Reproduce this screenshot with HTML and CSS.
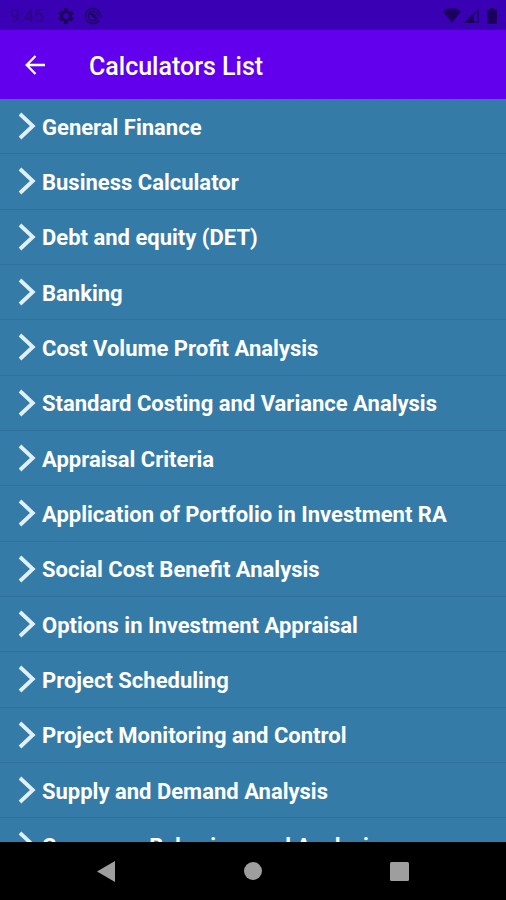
FILE: index.html
```html
<!DOCTYPE html>
<html lang="en">
<head>
<meta charset="utf-8">
<title>Calculators List</title>
<link rel="stylesheet" href="styles.css">
</head>
<body>
<svg class="defs" width="0" height="0" aria-hidden="true">
  <symbol id="chevron" viewBox="0 0 18 28"><path d="M2 2L14.8 14L2 26" fill="none" stroke="currentColor" stroke-width="3.8"/></symbol>
</svg>
<div class="screen">
  <header class="status">
    <span class="time">9:45</span>
    <svg class="gear" viewBox="2 2 20 20"><path fill="currentColor" d="M19.14 12.94c.04-.3.06-.61.06-.94s-.02-.64-.07-.94l2.03-1.58c.18-.14.23-.41.12-.61l-1.92-3.32c-.12-.22-.37-.29-.59-.22l-2.39.96c-.5-.38-1.03-.7-1.62-.94L14.4 2.81c-.04-.24-.24-.41-.48-.41h-3.84c-.24 0-.43.17-.47.41l-.36 2.54c-.59.24-1.13.57-1.62.94l-2.39-.96c-.22-.08-.47 0-.59.22L2.74 8.87c-.12.21-.08.47.12.61l2.03 1.58c-.05.3-.09.63-.09.94s.02.64.07.94l-2.03 1.58c-.18.14-.23.41-.12.61l1.92 3.32c.12.22.37.29.59.22l2.39-.96c.5.38 1.03.7 1.62.94l.36 2.54c.05.24.24.41.48.41h3.84c.24 0 .44-.17.47-.41l.36-2.54c.59-.24 1.13-.56 1.62-.94l2.39.96c.22.08.47 0 .59-.22l1.92-3.32c.12-.22.07-.47-.12-.61zM12 15.6A3.6 3.6 0 1 1 12 8.4a3.6 3.6 0 0 1 0 7.2z"/></svg>
    <svg class="sync" viewBox="0 0 18 18" fill="none" stroke="currentColor"><path stroke-width="1.4" d="M15.4 12.9A7.5 7.5 0 1 1 16.4 8L17.4 10.4"/><circle cx="9" cy="9" r="4.7" stroke-width="1.4"/><path stroke-width="1.6" d="M5.5 6L12.2 12M8 6.2L11.8 9.5"/></svg>
    <div class="signals">
      <svg width="18" height="15" viewBox="0 0 18 15"><path fill="currentColor" d="M0 3.5C5-.9 13-.9 18 3.5L9 14.7z"/></svg>
      <svg width="15" height="15" viewBox="0 0 15 15"><path fill="currentColor" d="M0 15L10 5V15z"/><path fill="none" stroke="currentColor" stroke-width="1.2" d="M2 14.2L14.2 2V14.2z"/></svg>
      <svg class="battery" width="10" height="16" viewBox="0 0 10 16"><path fill="currentColor" d="M3 0h4v1.5h2q1 0 1 1V15q0 1-1 1H1q-1 0-1-1V2.500q0-1 1-1h2z"/></svg>
    </div>
  </header>
  <div class="appbar">
    <svg class="back" viewBox="0 0 20 20" fill="none" stroke="currentColor" stroke-width="2.3"><path d="M20 10H2M10.500 1L1.700 10L10.500 19"/></svg>
    <h1 class="title">Calculators List</h1>
  </div>
  <ul class="list">
    <li class="row"><svg class="chevron"><use href="#chevron"/></svg><span>General Finance</span></li>
    <li class="row"><svg class="chevron"><use href="#chevron"/></svg><span>Business Calculator</span></li>
    <li class="row"><svg class="chevron"><use href="#chevron"/></svg><span>Debt and equity (DET)</span></li>
    <li class="row"><svg class="chevron"><use href="#chevron"/></svg><span>Banking</span></li>
    <li class="row"><svg class="chevron"><use href="#chevron"/></svg><span>Cost Volume Profit Analysis</span></li>
    <li class="row"><svg class="chevron"><use href="#chevron"/></svg><span>Standard Costing and Variance Analysis</span></li>
    <li class="row"><svg class="chevron"><use href="#chevron"/></svg><span>Appraisal Criteria</span></li>
    <li class="row"><svg class="chevron"><use href="#chevron"/></svg><span>Application of Portfolio in Investment RA</span></li>
    <li class="row"><svg class="chevron"><use href="#chevron"/></svg><span>Social Cost Benefit Analysis</span></li>
    <li class="row"><svg class="chevron"><use href="#chevron"/></svg><span>Options in Investment Appraisal</span></li>
    <li class="row"><svg class="chevron"><use href="#chevron"/></svg><span>Project Scheduling</span></li>
    <li class="row"><svg class="chevron"><use href="#chevron"/></svg><span>Project Monitoring and Control</span></li>
    <li class="row"><svg class="chevron"><use href="#chevron"/></svg><span>Supply and Demand Analysis</span></li>
    <li class="row"><svg class="chevron"><use href="#chevron"/></svg><span>Consumer Behaviour and Analysis</span></li>
  </ul>
  <nav class="navbar">
    <svg width="18" height="21" viewBox="0 0 18 21"><path fill="currentColor" d="M18 0V21L0 10.500z"/></svg>
    <svg width="18" height="18" viewBox="0 0 18 18"><circle cx="9" cy="9" r="9" fill="currentColor"/></svg>
    <svg width="19" height="19" viewBox="0 0 19 19"><rect width="19" height="19" rx="1.500" fill="currentColor"/></svg>
  </nav>
</div>
</body>
</html>
```
FILE: styles.css
```css
* { box-sizing: border-box; }
body { margin: 0; font-family: Roboto, sans-serif; background: #000; }
svg { display: block; flex: none; }
.defs { position: absolute; }
.screen { display: flex; flex-direction: column; width: 506px; height: 900px; overflow: hidden; }
.status { display: flex; align-items: center; height: 30px; flex: none; padding: 1px 9px 0 10px; background: #3a00b3; color: #1c005d; }
.time { width: 48px; font-size: 17.5px; line-height: 20px; color: #2b0085; }
.gear { width: 16px; height: 16px; }
.sync { width: 18px; height: 18px; margin-left: 10px; }
.signals { display: flex; align-items: center; gap: 3px; margin-left: auto; }
.battery { margin-left: 5px; }
.appbar { display: flex; align-items: center; height: 69px; flex: none; padding-left: 25px; background: #6200ee; color: #fff; }
.back { width: 20px; height: 20px; }
.title { margin: 4px 0 0 44px; font-size: 25px; font-weight: 500; line-height: 30px; }
.list { flex: 1; min-height: 0; margin: 0; padding: 0; overflow: hidden; list-style: none; background: #357ba7; }
.row { display: flex; align-items: center; height: 55.33px; padding-left: 18px; border-bottom: 1px solid #2f719c; color: #fff; font-size: 22px; font-weight: 700; line-height: 28px; white-space: nowrap; }
.row span { margin-left: 6px; padding-top: 3.3px; }
.chevron { width: 18px; height: 28px; color: #e0f0fd; }
.navbar { display: flex; align-items: center; justify-content: space-between; height: 58px; flex: none; padding: 0 97px; background: #000; color: #9e9e9e; }
```
